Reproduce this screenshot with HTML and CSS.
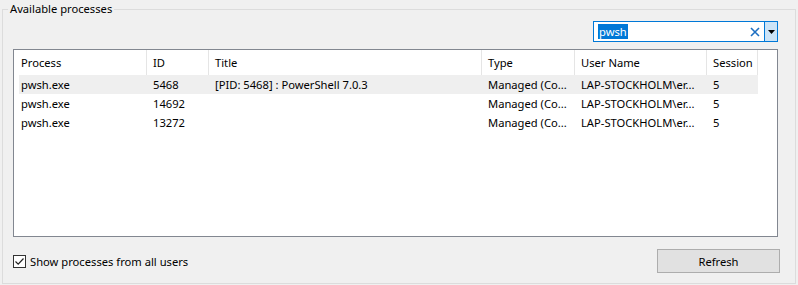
FILE: index.html
```html
<!DOCTYPE html>
<html>
<head>
<meta charset="utf-8">
<link rel="stylesheet" href="styles.css">
</head>
<body>
<div class="group">
  <span class="legend">Available processes</span>
  <div class="filter-row">
    <div class="combo">
      <span class="combo-text"><span class="sel">pwsh</span></span>
      <span class="clear">
        <svg width="10" height="10" viewBox="0 0 10 10"><path d="M1 1 L9 9 M9 1 L1 9" stroke="#1e6fc2" stroke-width="1.6" fill="none"/></svg>
      </span>
      <span class="drop">
        <svg width="7" height="4" viewBox="0 0 7 4"><path d="M0 0 H7 L3.5 4 Z" fill="#000"/></svg>
      </span>
    </div>
  </div>
  <div class="list">
    <div class="header">
      <div class="hc c1">Process</div>
      <div class="hc c2">ID</div>
      <div class="hc c3">Title</div>
      <div class="hc c4">Type</div>
      <div class="hc c5">User Name</div>
      <div class="hc c6">Session</div>
    </div>
    <div class="row hl">
      <div class="rc c1">pwsh.exe</div>
      <div class="rc c2">5468</div>
      <div class="rc c3">[PID: 5468] : PowerShell 7.0.3</div>
      <div class="rc c4">Managed (Co...</div>
      <div class="rc c5">LAP-STOCKHOLM\er...</div>
      <div class="rc c6">5</div>
    </div>
    <div class="row">
      <div class="rc c1">pwsh.exe</div>
      <div class="rc c2">14692</div>
      <div class="rc c3"></div>
      <div class="rc c4">Managed (Co...</div>
      <div class="rc c5">LAP-STOCKHOLM\er...</div>
      <div class="rc c6">5</div>
    </div>
    <div class="row">
      <div class="rc c1">pwsh.exe</div>
      <div class="rc c2">13272</div>
      <div class="rc c3"></div>
      <div class="rc c4">Managed (Co...</div>
      <div class="rc c5">LAP-STOCKHOLM\er...</div>
      <div class="rc c6">5</div>
    </div>
  </div>
  <div class="bottom">
    <label class="check">
      <span class="box">
        <svg width="11" height="11" viewBox="0 0 11 11"><path d="M1.5 5.5 L4.2 8.2 L9.5 2.5" stroke="#222" stroke-width="1.2" fill="none"/></svg>
      </span>
      <span class="check-label">Show processes from all users</span>
    </label>
    <button class="btn">Refresh</button>
  </div>
</div>
</body>
</html>
```

FILE: styles.css
```css
* { box-sizing: border-box; }
html, body {
  margin: 0;
  padding: 0;
  background: #f0f0f0;
  font-family: "Noto Sans", "Liberation Sans", sans-serif;
  font-size: 11.2px;
  color: #000;
  width: 798px;
  height: 285px;
  overflow: hidden;
}
.group {
  position: relative;
  margin: 9px 2px 0 2px;
  height: 275px;
  border: 1px solid #dcdcdc;
  padding: 11px 17px 0 10px;
}
.legend {
  position: absolute;
  top: -10px;
  left: 5px;
  padding: 0 2px;
  background: #f0f0f0;
  line-height: 18px;
  color: #000;
}
.filter-row {
  display: flex;
  justify-content: flex-end;
}
.combo {
  width: 185px;
  height: 21px;
  border: 1px solid #0078d7;
  background: #fff;
  display: flex;
  align-items: stretch;
}
.combo-text {
  flex: 1;
  display: flex;
  align-items: center;
  padding-left: 4px;
}
.sel {
  background: #0078d7;
  color: #fff;
  line-height: 15px;
  padding: 0 1px;
}
.clear {
  width: 14px;
  display: flex;
  align-items: center;
  justify-content: flex-start;
}
.drop {
  width: 13px;
  border-left: 1px solid #0078d7;
  background: #cce4f7;
  display: flex;
  align-items: center;
  justify-content: center;
}
.list {
  margin-top: 7px;
  height: 188px;
  border: 1px solid #828790;
  background: #fff;
}
.header {
  display: flex;
  height: 25px;
}
.hc {
  height: 25px;
  line-height: 25px;
  border-right: 1px solid #e5e5e5;
  padding-left: 6px;
  white-space: nowrap;
}
.header .c1 { padding-left: 7px; }
.c1 { width: 133px; }
.c2 { width: 62px; }
.c3 { width: 273px; }
.c4 { width: 93px; }
.c5 { width: 132px; }
.c6 { width: 51px; }
.row {
  display: flex;
  height: 19px;
  margin-left: 5px;
  width: 739px;
}
.row.hl { background: #efefef; }
.rc {
  line-height: 19px;
  padding-left: 6px;
  white-space: nowrap;
  overflow: hidden;
}
.row .c1 { width: 128px; padding-left: 2px; }
.bottom {
  display: flex;
  justify-content: space-between;
  align-items: center;
  margin-top: 12px;
  margin-right: -2px;
}
.check {
  display: flex;
  align-items: center;
  gap: 4px;
  margin-top: 0;
}
.box {
  width: 13px;
  height: 13px;
  border: 1px solid #333;
  background: #fff;
  display: flex;
  align-items: center;
  justify-content: center;
}
.btn {
  width: 123px;
  height: 24px;
  border: 1px solid #adadad;
  background: #e1e1e1;
  font: inherit;
  color: #000;
  padding: 0;
}
```
